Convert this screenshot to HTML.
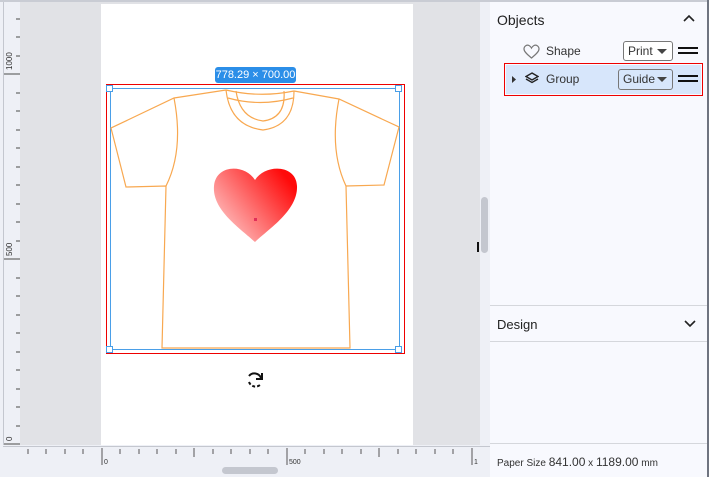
<!DOCTYPE html>
<html><head><style>
*{margin:0;padding:0;box-sizing:border-box}
body{width:709px;height:477px;overflow:hidden;background:#eef0f6;font-family:"Liberation Sans",sans-serif;position:relative}
.a{position:absolute}
</style></head><body>
<div class="a" style="left:0;top:0;width:709px;height:2px;background:#c9ccd4"></div>
<div class="a" style="left:20px;top:2px;width:460px;height:443px;background:#e1e2e6"></div>
<div class="a" style="left:101px;top:4px;width:312px;height:441px;background:#fff"></div>
<!-- left ruler -->
<div class="a" style="left:3px;top:2px;width:1px;height:445px;background:#c4c7cf"></div>
<svg class="a" style="left:0;top:0" width="20" height="445">
<g stroke="#666" stroke-width="1.2">
<line x1="16" y1="19" x2="20" y2="19"/><line x1="16" y1="37" x2="20" y2="37"/><line x1="16" y1="56" x2="20" y2="56"/>
<line x1="4" y1="74" x2="20" y2="74"/>
<line x1="16" y1="93" x2="20" y2="93"/><line x1="16" y1="111" x2="20" y2="111"/><line x1="16" y1="130" x2="20" y2="130"/>
<line x1="16" y1="148" x2="20" y2="148"/><line x1="16" y1="167" x2="20" y2="167"/><line x1="16" y1="185" x2="20" y2="185"/>
<line x1="16" y1="204" x2="20" y2="204"/><line x1="16" y1="222" x2="20" y2="222"/><line x1="16" y1="241" x2="20" y2="241"/>
<line x1="4" y1="259" x2="20" y2="259"/>
<line x1="16" y1="278" x2="20" y2="278"/><line x1="16" y1="296" x2="20" y2="296"/><line x1="16" y1="315" x2="20" y2="315"/>
<line x1="16" y1="333" x2="20" y2="333"/><line x1="16" y1="352" x2="20" y2="352"/><line x1="16" y1="370" x2="20" y2="370"/>
<line x1="16" y1="389" x2="20" y2="389"/><line x1="16" y1="407" x2="20" y2="407"/><line x1="16" y1="426" x2="20" y2="426"/>
<line x1="4" y1="444" x2="20" y2="444"/>
</g>
<g font-size="8" fill="#333" font-family="Liberation Sans">
<text transform="translate(12,70) rotate(-90)">1000</text>
<text transform="translate(12,256) rotate(-90)">500</text>
<text transform="translate(12,441) rotate(-90)">0</text>
</g>
</svg>
<!-- bottom ruler -->
<div class="a" style="left:0;top:445px;width:490px;height:32px;background:#eef0f6"></div>
<div class="a" style="left:3px;top:446px;width:487px;height:1px;background:#c4c7cf"></div>
<svg class="a" style="left:0;top:445px" width="490" height="32">
<g stroke="#555" stroke-width="1">
<line x1="28" y1="4" x2="28" y2="9"/><line x1="46" y1="4" x2="46" y2="9"/><line x1="65" y1="4" x2="65" y2="9"/><line x1="83" y1="4" x2="83" y2="9"/>
<line x1="102" y1="3" x2="102" y2="20"/>
<line x1="120" y1="4" x2="120" y2="9"/><line x1="139" y1="4" x2="139" y2="9"/><line x1="157" y1="4" x2="157" y2="9"/><line x1="176" y1="4" x2="176" y2="9"/>
<line x1="194" y1="3" x2="194" y2="12"/>
<line x1="213" y1="4" x2="213" y2="9"/><line x1="231" y1="4" x2="231" y2="9"/><line x1="250" y1="4" x2="250" y2="9"/><line x1="268" y1="4" x2="268" y2="9"/>
<line x1="287" y1="3" x2="287" y2="20"/>
<line x1="305" y1="4" x2="305" y2="9"/><line x1="324" y1="4" x2="324" y2="9"/><line x1="342" y1="4" x2="342" y2="9"/><line x1="361" y1="4" x2="361" y2="9"/>
<line x1="379" y1="3" x2="379" y2="12"/>
<line x1="398" y1="4" x2="398" y2="9"/><line x1="416" y1="4" x2="416" y2="9"/><line x1="435" y1="4" x2="435" y2="9"/><line x1="453" y1="4" x2="453" y2="9"/>
<line x1="472" y1="3" x2="472" y2="20"/>
</g>
<g font-size="7" fill="#333" font-family="Liberation Sans"><text x="104" y="19">0</text><text x="289" y="19">500</text><text x="474" y="19">1</text></g>
</svg>
<div class="a" style="left:222px;top:467px;width:56px;height:7px;border-radius:4px;background:#c4c7cf"></div>
<!-- vertical scrollbar -->
<div class="a" style="left:480px;top:2px;width:10px;height:443px;background:#eef0f6"></div>
<div class="a" style="left:481px;top:197px;width:7px;height:56px;border-radius:4px;background:#c4c7cf"></div>
<div class="a" style="left:477px;top:242px;width:2px;height:10px;background:#111"></div>
<!-- selection -->
<div class="a" style="left:106px;top:84px;width:299px;height:270px;border:1px solid #e00"></div>
<div class="a" style="left:110px;top:88px;width:290px;height:262px;border:1.5px solid #4a9fe8"></div>
<div class="a" style="left:106px;top:85px;width:7px;height:7px;border:1px solid #4a9fe8;background:#fff"></div>
<div class="a" style="left:395px;top:85px;width:7px;height:7px;border:1px solid #4a9fe8;background:#fff"></div>
<div class="a" style="left:106px;top:346px;width:7px;height:7px;border:1px solid #4a9fe8;background:#fff"></div>
<div class="a" style="left:395px;top:346px;width:7px;height:7px;border:1px solid #4a9fe8;background:#fff"></div>
<div class="a" style="left:215px;top:67px;width:81px;height:16px;border-radius:3px;background:#2b8ee8;color:#fff;font-size:11px;line-height:16px;text-align:center">778.29 × 700.00</div>
<svg class="a" style="left:100px;top:60px" width="310" height="300">
<defs><linearGradient id="g" x1="0" y1="1" x2="1" y2="0.3"><stop offset="0" stop-color="#fde0e0"/><stop offset="1" stop-color="#ff0a0a"/></linearGradient></defs>
<g fill="none" stroke="#f8a850" stroke-width="1.2">
<path d="M126 30 L74 38 L11 68 L26 127 L66 126 L62 288 L250 288 L246 126 L284 125 L299 67 L239 39 L194 31"/>
<path d="M74 38 Q84 90 66 126"/>
<path d="M239 39 Q229 90 246 126"/>
<path d="M126 30 Q130 66 163 70 Q194 66 194 31"/>
<path d="M136 31 Q140 58 163 61 Q186 58 184 31"/>
<path d="M126 30 Q160 38 194 31"/>
<path d="M128 38 Q160 47 193 38"/>
</g>
<path d="M155 182 C140 168 112 150 114 126 C116 104 145 104 155 120 C165 104 196 104 197 126 C198 150 170 168 155 182 Z" fill="url(#g)"/>
<rect x="154" y="158" width="3" height="3" fill="#e0305a"/>
</svg>
<!-- rotate icon -->
<svg class="a" style="left:245px;top:370px" width="20" height="20" viewBox="0 0 20 20">
<path d="M16 8 A7 7 0 0 0 4 6" fill="none" stroke="#111" stroke-width="2"/>
<path d="M4 12 A7 7 0 0 0 16 14" fill="none" stroke="#111" stroke-width="2" stroke-dasharray="3 2"/>
<path d="M17 3 L17 9 L11 9" fill="none" stroke="#111" stroke-width="2"/>
</svg>
<!-- right panel -->
<div class="a" style="left:490px;top:2px;width:217px;height:475px;background:#f8f9fe"></div>
<div class="a" style="left:707px;top:0;width:2px;height:477px;background:#6f7480"></div>
<div class="a" style="left:497px;top:12px;font-size:14px;color:#222">Objects</div>
<svg class="a" style="left:683px;top:14px" width="12" height="8"><path d="M1 7 L6 2 L11 7" fill="none" stroke="#222" stroke-width="1.6"/></svg>
<svg class="a" style="left:523px;top:44px" width="17" height="15"><path d="M8.5 14 C5 11 1 8 1 5 C1 2 4 0.5 6 1.5 C7.3 2.2 8 3 8.5 4 C9 3 9.7 2.2 11 1.5 C13 0.5 16 2 16 5 C16 8 12 11 8.5 14 Z" fill="none" stroke="#777" stroke-width="1.2"/></svg>
<div class="a" style="left:546px;top:44px;font-size:12px;color:#333">Shape</div>
<div class="a" style="left:623px;top:41px;width:50px;height:20px;border:1px solid #777;border-radius:3px;background:#fff;font-size:12px;color:#333;line-height:18px;padding-left:4px">Print</div>
<svg class="a" style="left:657px;top:49px" width="10" height="6"><path d="M0 0 L10 0 L5 5Z" fill="#444"/></svg>
<div class="a" style="left:678px;top:47px;width:20px;height:2px;background:#111"></div>
<div class="a" style="left:678px;top:52px;width:20px;height:2px;background:#111"></div>
<div class="a" style="left:504px;top:63px;width:199px;height:33px;border:1px solid #e00"></div>
<div class="a" style="left:506px;top:65px;width:195px;height:29px;background:#d7e6fb"></div>
<svg class="a" style="left:512px;top:76px" width="5" height="7"><path d="M0 0 L4 3.5 L0 7Z" fill="#333"/></svg>
<svg class="a" style="left:525px;top:72px" width="14" height="12"><path d="M7 1 L13 4.5 L7 8 L1 4.5Z M1 7 L7 10.5 L13 7" fill="none" stroke="#222" stroke-width="1.4"/></svg>
<div class="a" style="left:546px;top:72px;font-size:12px;color:#333">Group</div>
<div class="a" style="left:618px;top:69px;width:55px;height:21px;border:1px solid #777;border-radius:3px;background:#d7e6fb;font-size:12px;color:#333;line-height:19px;padding-left:4px">Guide</div>
<svg class="a" style="left:657px;top:77px" width="10" height="6"><path d="M0 0 L10 0 L5 5Z" fill="#444"/></svg>
<div class="a" style="left:678px;top:75px;width:20px;height:2px;background:#111"></div>
<div class="a" style="left:678px;top:80px;width:20px;height:2px;background:#111"></div>
<div class="a" style="left:490px;top:305px;width:217px;height:1px;background:#d5d7dc"></div>
<div class="a" style="left:497px;top:317px;font-size:13px;color:#222">Design</div>
<svg class="a" style="left:684px;top:320px" width="12" height="8"><path d="M1 1 L6 6 L11 1" fill="none" stroke="#222" stroke-width="1.6"/></svg>
<div class="a" style="left:490px;top:341px;width:217px;height:1px;background:#d5d7dc"></div>
<div class="a" style="left:490px;top:443px;width:217px;height:1px;background:#d5d7dc"></div>
<div class="a" style="left:497px;top:455px;font-size:10px;color:#333;white-space:nowrap">Paper Size <span style="font-size:12px">841.00</span> x <span style="font-size:12px">1189.00</span> mm</div>
</body></html>
